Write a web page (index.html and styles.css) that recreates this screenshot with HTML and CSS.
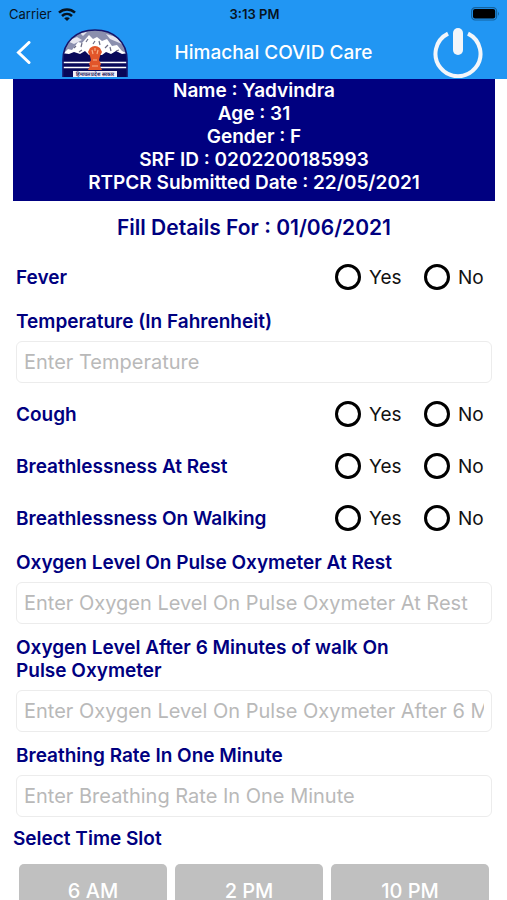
FILE: index.html
```html
<!DOCTYPE html>
<html lang="en">
<head>
  <meta charset="UTF-8">
  <meta name="viewport" content="width=device-width, initial-scale=1.0">
  <title>Himachal COVID Care</title>
  <link rel="stylesheet" href="styles.css">
</head>
<body>
  <header class="topbar">
    <div class="status">
      <div class="carrier">
        <span>Carrier</span>
        <svg width="18" height="13" viewBox="0 0 18 13" fill="none" stroke="#07131f" stroke-width="2.6">
          <path d="M1 4.6C5.6.4 12.4.4 17 4.6"/>
          <path d="M4 8C6.9 5.4 11.1 5.4 14 8"/>
          <path d="M9 13L6.2 10.2C7.7 8.8 10.3 8.8 11.8 10.2Z" fill="#07131f" stroke="none"/>
        </svg>
      </div>
      <span class="time">3:13 PM</span>
      <svg class="battery" width="29" height="14" viewBox="0 0 29 14">
        <rect x=".6" y=".6" width="25" height="12.4" rx="3.6" fill="none" stroke="#14639f" stroke-width="1.2"/>
        <rect x="2" y="2" width="22.2" height="9.6" rx="2" fill="#000"/>
        <path d="M27 4.8Q29 6.8 27 8.8Z" fill="#14639f"/>
      </svg>
    </div>
    <div class="nav">
      <button class="icon-button" aria-label="Back">
        <svg width="16" height="24" viewBox="0 0 16 24" fill="none" stroke="#fff" stroke-width="3" stroke-linecap="round">
          <path d="M13 1.5L2.5 11.5L13 21.5"/>
        </svg>
      </button>
      <svg class="emblem" width="66" height="48" viewBox="0 0 66 48">
        <defs>
          <clipPath id="dome"><path d="M1 48V31C1 13 14 1 33 1S65 13 65 31V48Z"/></clipPath>
        </defs>
        <g clip-path="url(#dome)">
          <rect width="66" height="48" fill="#8b8fae"/>
          <path d="M5 12L15 8L20 11L12 15ZM44 5L54 8L60 15L48 10ZM18 4L25 3L21 7Z" fill="#e6e6ef"/>
          <path d="M0 26L6 20L10 21L16 13L20 14L27 6L31 10L35 8L40 12L45 10L50 17L55 16L60 22L66 25V34H0Z" fill="#fff"/>
          <path d="M12 19L14 17M19 18L20 14M24 13L26 10M31 15L33 12M38 16L37 12M43 19L46 16M49 22L48 18M17 23L20 21M54 22L57 21" stroke="#6c6c85" stroke-width="1.2"/>
          <path d="M0 24L7 25L12 23L18 25L23 22L27 26H40L44 23L49 25L54 22L60 25L66 24V48H0Z" fill="#08085a"/>
          <path d="M0 33.5H66M0 38.5H66" stroke="#fff" stroke-width="1.4"/>
        </g>
        <path d="M1 48V31C1 13 14 1 33 1S65 13 65 31V48" fill="none" stroke="#15156b" stroke-width="1.6"/>
        <path d="M28 19Q33 15 38 19L40 23L38 27L37 31L39 35L38 37L40 41H26L28 37L27 35L29 31L28 27L26 23Z" fill="#e2562a"/>
        <path d="M30 21L31 25M35 25L36 21M31 31H35M30 37H36M33 19V22" stroke="#f6ad86" stroke-width="1.2"/>
        <rect x="11" y="42" width="44" height="6" fill="#f3f1fa"/>
        <text class="emblem-text" x="33" y="47" text-anchor="middle">हिमाचल प्रदेश सरकार</text>
      </svg>
      <h1>Himachal COVID Care</h1>
      <button class="icon-button" aria-label="Log out">
        <svg width="50" height="50" viewBox="0 0 50 50" fill="none" stroke="#f3f6fa" stroke-linecap="round">
          <path d="M15 5.6A22.5 22.5 0 1 0 35 5.6" stroke-width="4" stroke-linecap="butt"/>
          <path d="M25 5V22" stroke-width="10"/>
        </svg>
      </button>
    </div>
  </header>

  <main class="content">
    <section class="patient">
      <div>Name : Yadvindra</div>
      <div>Age : 31</div>
      <div>Gender : F</div>
      <div>SRF ID : 0202200185993</div>
      <div>RTPCR Submitted Date : 22/05/2021</div>
    </section>

    <h2>Fill Details For : 01/06/2021</h2>

    <form>
      <div class="row" role="radiogroup" aria-labelledby="fever">
        <span class="caption" id="fever">Fever</span>
        <label class="choice"><input type="radio" name="fever">Yes</label>
        <label class="choice"><input type="radio" name="fever">No</label>
      </div>

      <div class="field">
        <label class="caption" for="temperature">Temperature (In Fahrenheit)</label>
        <input type="text" id="temperature" placeholder="Enter Temperature">
      </div>

      <div class="row" role="radiogroup" aria-labelledby="cough">
        <span class="caption" id="cough">Cough</span>
        <label class="choice"><input type="radio" name="cough">Yes</label>
        <label class="choice"><input type="radio" name="cough">No</label>
      </div>

      <div class="row" role="radiogroup" aria-labelledby="rest">
        <span class="caption" id="rest">Breathlessness At Rest</span>
        <label class="choice"><input type="radio" name="rest">Yes</label>
        <label class="choice"><input type="radio" name="rest">No</label>
      </div>

      <div class="row" role="radiogroup" aria-labelledby="walking">
        <span class="caption" id="walking">Breathlessness On Walking</span>
        <label class="choice"><input type="radio" name="walking">Yes</label>
        <label class="choice"><input type="radio" name="walking">No</label>
      </div>

      <div class="field">
        <label class="caption" for="oxygenRest">Oxygen Level On Pulse Oxymeter At Rest</label>
        <input type="text" id="oxygenRest" placeholder="Enter Oxygen Level On Pulse Oxymeter At Rest">
      </div>

      <div class="field">
        <label class="caption" for="oxygenWalk">Oxygen Level After 6 Minutes of walk On Pulse Oxymeter</label>
        <input type="text" id="oxygenWalk" placeholder="Enter Oxygen Level On Pulse Oxymeter After 6 Minutes">
      </div>

      <div class="field">
        <label class="caption" for="breathing">Breathing Rate In One Minute</label>
        <input type="text" id="breathing" placeholder="Enter Breathing Rate In One Minute">
      </div>

      <h3>Select Time Slot</h3>
      <div class="slots">
        <button type="button">6 AM</button>
        <button type="button">2 PM</button>
        <button type="button">10 PM</button>
      </div>
    </form>
  </main>
</body>
</html>
```
FILE: styles.css
```css
* {
  box-sizing: border-box;
}

html {
  height: 100%;
  overflow: hidden;
}

body {
  height: 100%;
  margin: 0;
  display: flex;
  flex-direction: column;
  font-family: Inter, "Liberation Sans", sans-serif;
  background: #fff;
  color: #000080;
}

.topbar {
  flex: none;
  background: #2196f3;
}

.status {
  display: grid;
  grid-template-columns: 1fr auto 1fr;
  align-items: center;
  height: 26px;
  padding: 2px 7px 0 9px;
  font-size: 13px;
  color: #07131f;
}

.carrier {
  display: flex;
  align-items: center;
  gap: 6px;
}

.time {
  font-weight: 600;
}

.battery {
  justify-self: end;
}

.nav {
  display: flex;
  align-items: center;
  height: 53px;
  padding: 0 24px 0 16px;
}

.icon-button {
  display: flex;
  padding: 0;
  border: none;
  background: none;
  cursor: pointer;
}

.emblem {
  margin-left: 30px;
}

.emblem-text {
  font-size: 5px;
  font-weight: 700;
  fill: #1c1c5c;
}

h1 {
  flex: 1;
  margin: 0;
  padding-right: 14px;
  text-align: center;
  font-size: 19px;
  font-weight: 500;
  color: #fff;
}

.content {
  flex: 1;
  min-height: 0;
  overflow: hidden;
  padding: 0 12px 0 13px;
}

.patient {
  padding-bottom: 7px;
  background: #000080;
  color: #fff;
  text-align: center;
  font-size: 19px;
  font-weight: 600;
  line-height: 23px;
}

h2 {
  margin: 0;
  padding-top: 4px;
  text-align: center;
  font-size: 21px;
  font-weight: 600;
  line-height: 46px;
}

.row,
.field {
  padding: 0 3px;
}

.row {
  display: flex;
  align-items: center;
  height: 52px;
}

.row .caption {
  flex: 1;
}

.field {
  padding-top: 7px;
  padding-bottom: 5px;
}

.caption,
h3 {
  font-size: 19px;
  font-weight: 600;
  line-height: 23px;
}

.field .caption {
  display: block;
  max-width: 400px;
}

.choice {
  display: flex;
  align-items: center;
  gap: 8px;
  width: 89px;
  font-size: 19px;
  color: #111;
}

.choice:last-child {
  width: 68px;
}

.choice input {
  appearance: none;
  flex: none;
  width: 26px;
  height: 26px;
  margin: 0;
  border: 3px solid #000;
  border-radius: 50%;
}

.choice input:checked {
  background: #000;
  box-shadow: inset 0 0 0 4px #fff;
}

.field input {
  display: block;
  width: 100%;
  height: 42px;
  margin-top: 8px;
  padding: 0 7px;
  border: 1px solid #ececec;
  border-radius: 6px;
  background: #fff;
  font-family: inherit;
  font-size: 20px;
  color: #111;
}

.field input::placeholder {
  color: #b9b9b9;
}

h3 {
  margin: 5px 0 14px;
}

.slots {
  display: flex;
  gap: 8px;
  padding: 0 6px;
}

.slots button {
  flex: 1 1 148px;
  height: 53px;
  border: none;
  border-radius: 5px;
  background: #c0c0c0;
  color: #fff;
  font-family: inherit;
  font-size: 20px;
  font-weight: 500;
}

.slots button:last-child {
  flex-basis: 158px;
}
```
